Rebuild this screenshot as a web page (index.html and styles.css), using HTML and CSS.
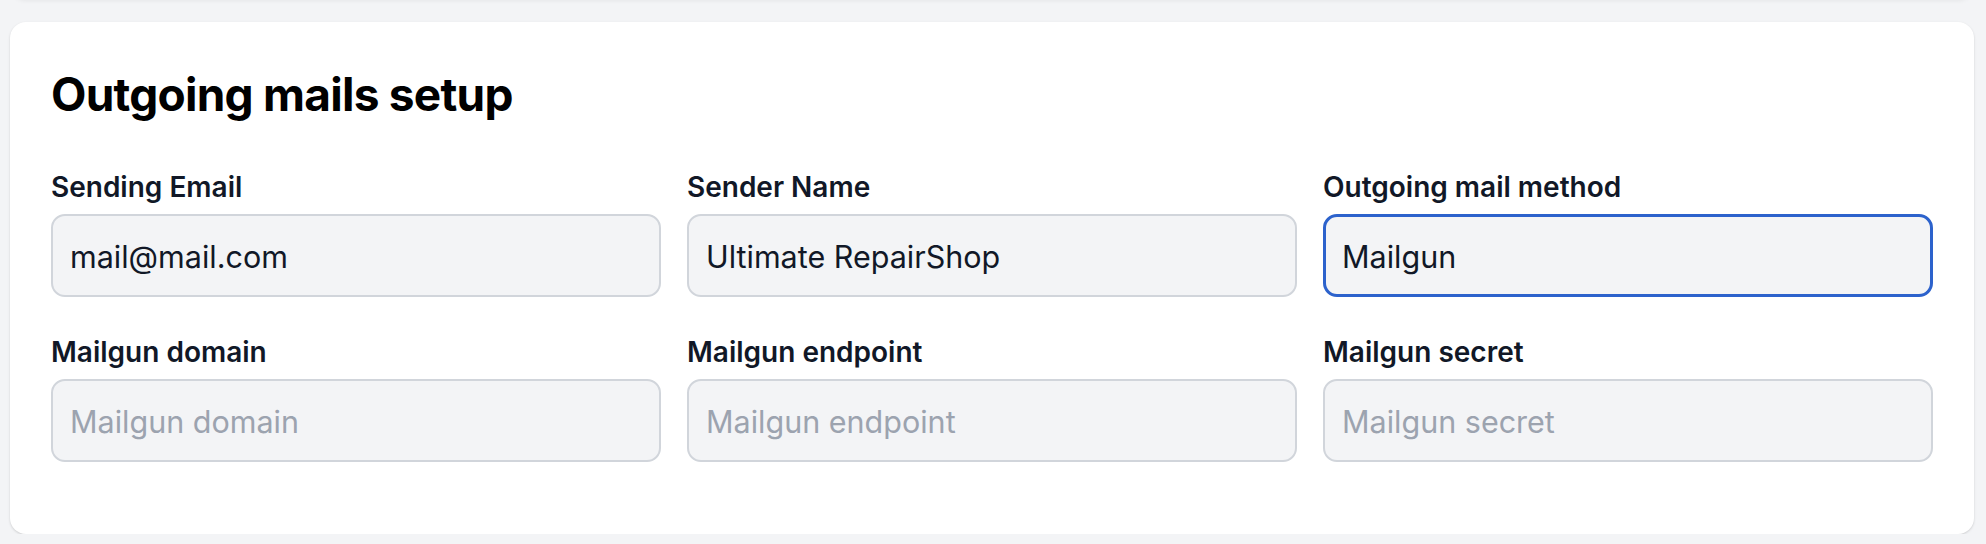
FILE: index.html
```html
<!DOCTYPE html>
<html lang="en">
<head>
    <meta charset="UTF-8">
    <meta name="viewport" content="width=device-width, initial-scale=1.0">
    <title>Outgoing mails setup</title>
    <link rel="stylesheet" href="styles.css">
</head>
<body>
    <div class="page">
        <!-- bottom of the settings card above, scrolled out of view -->
        <div class="card card-above"></div>

        <div class="card">
            <h2 class="card-title">Outgoing mails setup</h2>

            <div class="form-grid">
                <div class="field">
                    <label for="sendingEmail">Sending Email</label>
                    <input type="text" id="sendingEmail" value="mail@mail.com">
                </div>
                <div class="field">
                    <label for="senderName">Sender Name</label>
                    <input type="text" id="senderName" value="Ultimate RepairShop">
                </div>
                <div class="field">
                    <label for="mailMethod">Outgoing mail method</label>
                    <input type="text" id="mailMethod" class="is-focused" value="Mailgun">
                </div>
                <div class="field">
                    <label for="mailgunDomain">Mailgun domain</label>
                    <input type="text" id="mailgunDomain" placeholder="Mailgun domain">
                </div>
                <div class="field">
                    <label for="mailgunEndpoint">Mailgun endpoint</label>
                    <input type="text" id="mailgunEndpoint" placeholder="Mailgun endpoint">
                </div>
                <div class="field">
                    <label for="mailgunSecret">Mailgun secret</label>
                    <input type="text" id="mailgunSecret" placeholder="Mailgun secret">
                </div>
            </div>
        </div>
    </div>
</body>
</html>
```

FILE: styles.css
```css
body {
    font-family: Inter, "Noto Sans", Arial, sans-serif;
    margin: 0;
    background-color: #f3f4f6;
    color: #111827;
}
.page {
    padding: 0 12px 0 10px;
}
.card {
    background: white;
    border-radius: 16px;
    padding: 44px 41px 72px 41px;
    box-shadow: 0 1px 3px rgba(0,0,0,0.1), 0 1px 2px rgba(0,0,0,0.06);
}
.card-above {
    height: 40px;
    margin-top: -40px;
    padding: 0;
    margin-bottom: 22px;
    box-shadow: 0 1px 4px rgba(0,0,0,0.06);
}
.card-title {
    margin: 0 0 45px 0;
    font-size: 46px;
    line-height: 56px;
    font-weight: 700;
    letter-spacing: -0.75px;
    color: #000;
}
.form-grid {
    display: grid;
    grid-template-columns: repeat(3, 1fr);
    column-gap: 26px;
    row-gap: 35px;
}
.field label {
    display: block;
    margin-bottom: 7px;
    font-size: 28px;
    line-height: 40px;
    font-weight: 600;
    color: #111827;
}
.field input {
    display: block;
    width: 100%;
    height: 83px;
    box-sizing: border-box;
    padding: 2px 17px 0 17px;
    font-family: inherit;
    font-size: 30.5px;
    color: #111827;
    background: #f3f4f6;
    border: 2px solid #d1d5db;
    border-radius: 14px;
    outline: none;
}
.field input::placeholder {
    color: #9ca3af;
}
.field input.is-focused {
    border: 3px solid #2c62cc;
    padding-left: 16px;
}
```
